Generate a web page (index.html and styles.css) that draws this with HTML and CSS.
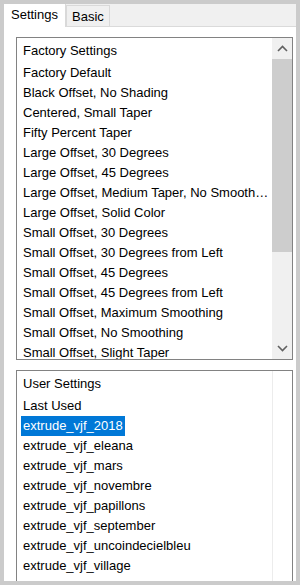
FILE: index.html
```html
<!DOCTYPE html>
<html>
<head>
	<meta charset="UTF-8">
	<title>Extrude presets</title>
	<link rel="stylesheet" href="styles.css">
</head>
<body>

	<div class="frame">

		<div class="tabs">
			<span class="tab tab-active">Settings</span>
			<span class="tab">Basic</span>
		</div>

		<div class="panel">

			<div class="list list-factory">
				<div class="list-items">
					<div class="list-head">Factory Settings</div>
					<div class="item">Factory Default</div>
					<div class="item">Black Offset, No Shading</div>
					<div class="item">Centered, Small Taper</div>
					<div class="item">Fifty Percent Taper</div>
					<div class="item">Large Offset, 30 Degrees</div>
					<div class="item">Large Offset, 45 Degrees</div>
					<div class="item">Large Offset, Medium Taper, No Smoothing</div>
					<div class="item">Large Offset, Solid Color</div>
					<div class="item">Small Offset, 30 Degrees</div>
					<div class="item">Small Offset, 30 Degrees from Left</div>
					<div class="item">Small Offset, 45 Degrees</div>
					<div class="item">Small Offset, 45 Degrees from Left</div>
					<div class="item">Small Offset, Maximum Smoothing</div>
					<div class="item">Small Offset, No Smoothing</div>
					<div class="item">Small Offset, Slight Taper</div>
				</div>
				<div class="scrollbar">
					<div class="scroll-btn">
						<svg width="11" height="7" viewBox="0 0 11 7"><path d="M1 6 L5.5 1.5 L10 6" fill="none" stroke="#606060" stroke-width="1.6"/></svg>
					</div>
					<div class="scroll-track">
						<div class="scroll-thumb"></div>
					</div>
					<div class="scroll-btn">
						<svg width="11" height="7" viewBox="0 0 11 7"><path d="M1 1 L5.5 5.5 L10 1" fill="none" stroke="#606060" stroke-width="1.6"/></svg>
					</div>
				</div>
			</div>

			<div class="list list-user">
				<div class="list-items">
					<div class="list-head">User Settings</div>
					<div class="item">Last Used</div>
					<div class="item"><span class="selected">extrude_vjf_2018</span></div>
					<div class="item">extrude_vjf_eleana</div>
					<div class="item">extrude_vjf_mars</div>
					<div class="item">extrude_vjf_novembre</div>
					<div class="item">extrude_vjf_papillons</div>
					<div class="item">extrude_vjf_september</div>
					<div class="item">extrude_vjf_uncoindecielbleu</div>
					<div class="item">extrude_vjf_village</div>
					<div class="item">extrude_vjf_vitrail</div>
				</div>
				<div class="scroll-edge"></div>
			</div>

		</div>

	</div>

</body>
</html>
```

FILE: styles.css
```css
html {
	box-sizing: border-box;
}

*,
*:before,
*:after {
	box-sizing: inherit;
}

body {
	margin: 0;
	font-family: "Liberation Sans", Arial, sans-serif;
	font-size: 13px;
	color: #000;
}

.frame {
	width: 300px;
	height: 585px;
	border: 4px solid #cbcbcb;
	background: #fff;
	overflow: hidden;
}

.tabs {
	display: flex;
	align-items: flex-end;
	height: 23px;
	background: #f0f0f0;
	border-bottom: 1px solid #dadada;
}

.tab {
	height: 21px;
	padding: 0 5px;
	line-height: 21px;
	background: #f0f0f0;
	border: 1px solid #d9d9d9;
	border-bottom: 0;
}

.tab-active {
	height: 24px;
	width: 62px;
	padding: 0 6px;
	margin-bottom: -1px;
	line-height: 22px;
	background: #fff;
	border-color: #fff #d9d9d9 #fff #fff;
}

.panel {
	padding: 10px 3px 0 12px;
}

.list {
	display: flex;
	border: 1px solid #828282;
	background: #fff;
}

.list-factory {
	height: 323px;
	margin-bottom: 10px;
}

.list-user {
	height: 240px;
}

.list-items {
	flex: 1;
	min-width: 0;
	overflow: hidden;
	padding-top: 1px;
	padding-left: 4px;
}

.list-head {
	height: 24px;
	line-height: 24px;
	padding-left: 2px;
}

.item {
	height: 20px;
	line-height: 20px;
	padding-left: 2px;
	padding-right: 2px;
	white-space: nowrap;
	overflow: hidden;
	text-overflow: ellipsis;
}

.selected {
	display: inline-block;
	margin-left: -2px;
	padding: 0 2px;
	background: #0078d7;
	color: #fff;
}

.scrollbar {
	width: 20px;
	display: flex;
	flex-direction: column;
	background: #f0f0f0;
}

.scroll-btn {
	height: 21px;
	display: flex;
	align-items: center;
	justify-content: center;
}

.scroll-track {
	flex: 1;
}

.scroll-thumb {
	height: 193px;
	background: #cdcdcd;
}

.scroll-edge {
	width: 20px;
	border-left: 1px solid #ececec;
}
```
